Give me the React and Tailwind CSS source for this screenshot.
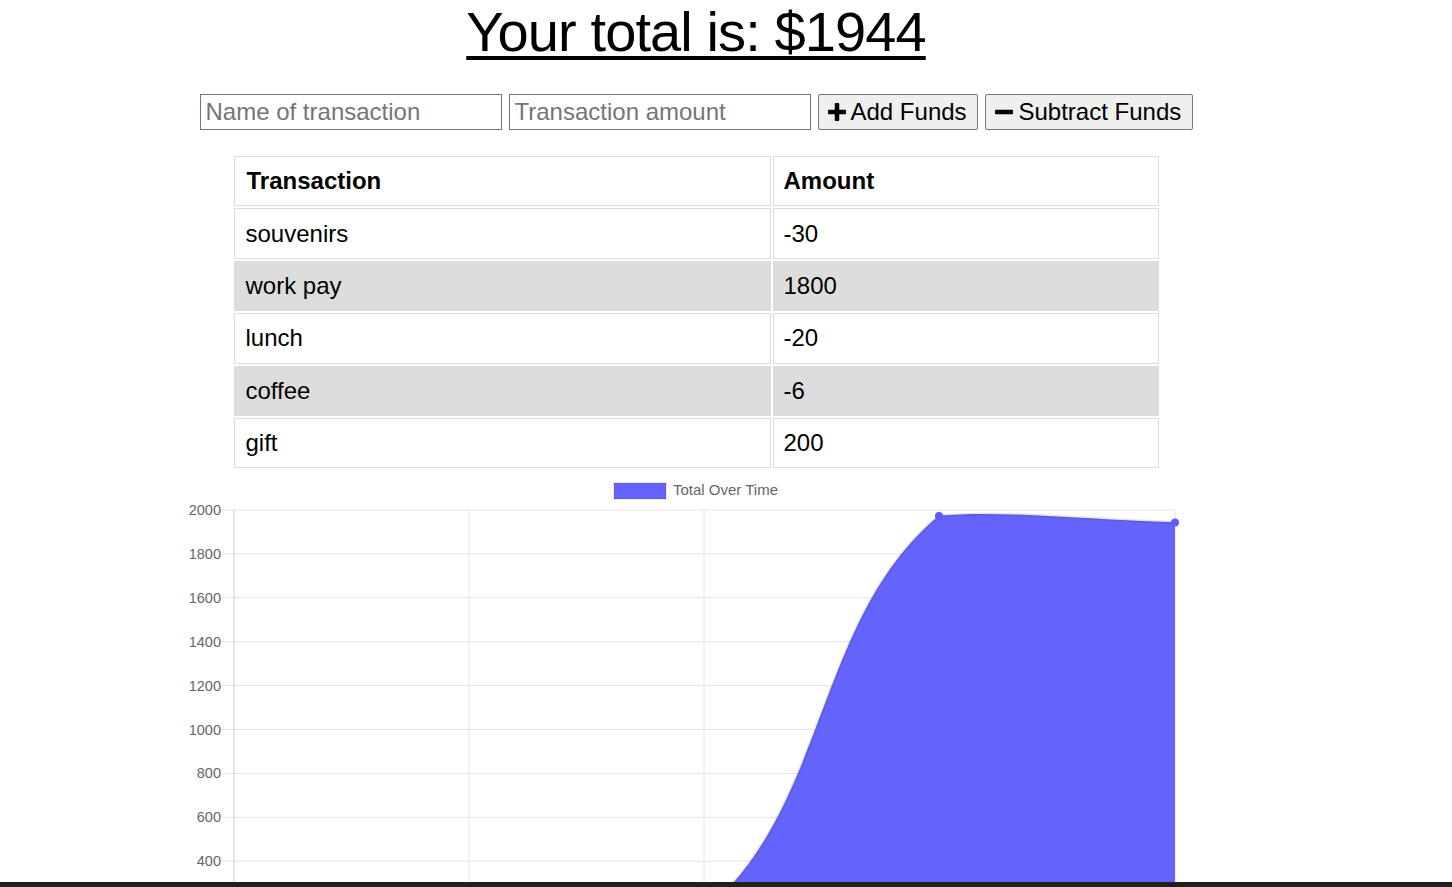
import React from "react";

const rows = [
  { name: "souvenirs", amount: "-30" },
  { name: "work pay", amount: "1800" },
  { name: "lunch", amount: "-20" },
  { name: "coffee", amount: "-6" },
  { name: "gift", amount: "200" },
];

const ticks = [2000, 1800, 1600, 1400, 1200, 1000, 800, 600, 400];
const yOf = (v) => 510 + (2000 - v) * 0.2195;
const cols = [234, 469, 704, 939, 1175];

function Chart() {
  const line =
    "M234,906 C328,906.5 375,906.2 469,907.3 C563,908.4 640.5,950 704,911.7 " +
    "C828.5,808 814.5,618.7 939,515.7 C1002.9,510 1080.6,519.7 1175,522.3";
  const area = line + " L1175,950 L234,950 Z";
  return (
    <svg width="1392" height="500" viewBox="0 470 1392 500" className="block">
      <rect x="614" y="483" width="52" height="16" fill="#6464fc" stroke="rgba(0,0,0,0.1)" strokeWidth="1.5" />
      <text x="673" y="495" fontSize="15" fill="#666" fontFamily="Liberation Sans, Arial, sans-serif">
        Total Over Time
      </text>
      {ticks.map((t) => (
        <g key={t}>
          <line x1="222" x2="1175" y1={yOf(t)} y2={yOf(t)} stroke="#e4e4e4" strokeWidth="1" />
          <text x="221" y={yOf(t) + 5} textAnchor="end" fontSize="14.5" fill="#666" fontFamily="Liberation Sans, Arial, sans-serif">
            {t}
          </text>
        </g>
      ))}
      <line x1="222" x2="1175" y1={yOf(200)} y2={yOf(200)} stroke="#e4e4e4" strokeWidth="1" />
      {cols.map((x, i) => (
        <line key={x} x1={x} x2={x} y1="510" y2="960" stroke={i === 0 ? "#cfcfcf" : "#e4e4e4"} strokeWidth="1" />
      ))}
      <path d={area} fill="#6464fc" />
      <path d={line} fill="none" stroke="rgba(0,0,0,0.1)" strokeWidth="3" />
      <circle cx="939" cy="516" r="4" fill="#5e5ef2" />
      <circle cx="1175" cy="522.5" r="4" fill="#5e5ef2" />
    </svg>
  );
}

function Plus() {
  return (
    <svg width="18" height="18" viewBox="0 0 18 18" className="shrink-0">
      <rect x="6.75" y="0" width="4.5" height="18" rx="1" fill="#000" />
      <rect x="0" y="6.75" width="18" height="4.5" rx="1" fill="#000" />
    </svg>
  );
}

function Minus() {
  return (
    <svg width="18" height="18" viewBox="0 0 18 18" className="shrink-0">
      <rect x="0" y="6.75" width="18" height="4.5" rx="1" fill="#000" />
    </svg>
  );
}

export default function App() {
  return (
    <div className="h-screen overflow-hidden bg-white text-black font-['Liberation_Sans',Arial,sans-serif]">
      <div className="w-[1392px]">
        <h1 className="pt-[4px] text-center text-[56px] leading-[56px] tracking-[-0.9px] underline decoration-[4px] underline-offset-[5px]">
          Your total is: $1944
        </h1>

        <div className="mt-[34px] flex justify-center gap-[7px]">
          <input
            placeholder="Name of transaction"
            className="h-[36px] w-[302px] border border-[#767676] px-[5px] text-[24px] placeholder:text-[#757575] outline-none"
          />
          <input
            placeholder="Transaction amount"
            className="h-[36px] w-[302px] border border-[#767676] px-[5px] text-[24px] placeholder:text-[#757575] outline-none"
          />
          <button className="flex h-[36px] w-[160px] shrink-0 items-center gap-[5px] whitespace-nowrap rounded-[2px] border border-[#767676] bg-[#efefef] pl-[9px] text-[24px]">
            <Plus />
            <span>Add Funds</span>
          </button>
          <button className="flex h-[36px] w-[208px] shrink-0 items-center gap-[6px] whitespace-nowrap rounded-[2px] border border-[#767676] bg-[#efefef] pl-[9px] text-[24px]">
            <Minus />
            <span>Subtract Funds</span>
          </button>
        </div>

        <div className="mx-auto mt-[26px] grid w-[925px] grid-cols-[537px_386px] gap-[2px] text-[24px]">
          <div className="flex h-[50.4px] items-center border border-[#dddddd] pl-[12px] font-bold">Transaction</div>
          <div className="flex h-[50.4px] items-center border border-[#dddddd] pl-[10px] font-bold">Amount</div>
          {rows.map((r, i) => (
            <React.Fragment key={r.name}>
              <div className={`flex h-[50.4px] items-center border border-[#dddddd] pl-[11px] ${i % 2 === 1 ? "bg-[#dddddd]" : ""}`}>
                {r.name}
              </div>
              <div className={`flex h-[50.4px] items-center border border-[#dddddd] pl-[10px] ${i % 2 === 1 ? "bg-[#dddddd]" : ""}`}>
                {r.amount}
              </div>
            </React.Fragment>
          ))}
        </div>

        <div className="mt-[2px]">
          <Chart />
        </div>
      </div>
      <div className="fixed inset-x-0 bottom-0 h-[5px] bg-[#202020]" />
    </div>
  );
}
